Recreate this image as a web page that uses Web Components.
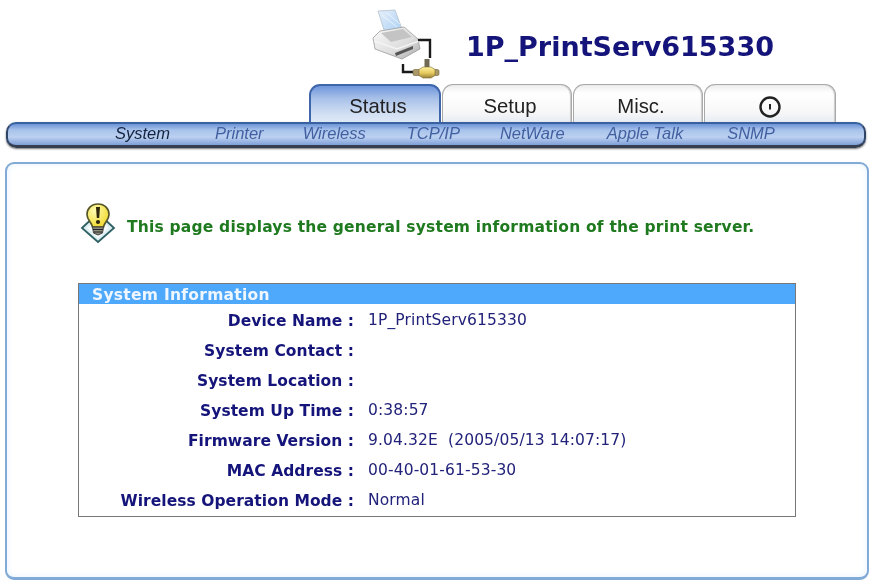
<!DOCTYPE html>
<html>
<head>
<meta charset="utf-8">
<title>1P_PrintServ615330</title>
<style>
  html, body { margin: 0; padding: 0; background: #fff; overflow: hidden; }
  body { width: 870px; height: 582px; font-family: "DejaVu Sans", Verdana, sans-serif; filter: blur(.35px); }
</style>
</head>
<body>
<ps-header name="1P_PrintServ615330"></ps-header>
<ps-tabs>
  <ps-tab active>Status</ps-tab>
  <ps-tab>Setup</ps-tab>
  <ps-tab>Misc.</ps-tab>
  <ps-tab icon>
    <svg width="24" height="24" viewBox="0 0 24 24" fill="none" stroke="#222" aria-label="Power">
      <circle cx="12" cy="12" r="9.500" stroke-width="2.400"/>
      <path d="M12 9v5.500" stroke-width="2"/>
    </svg>
  </ps-tab>
</ps-tabs>
<ps-subnav>
  <a class="on" style="margin-left:107px">System</a>
  <a style="margin-left:45px">Printer</a>
  <a style="margin-left:39px">Wireless</a>
  <a style="margin-left:41px">TCP/IP</a>
  <a style="margin-left:40px">NetWare</a>
  <a style="margin-left:42px">Apple Talk</a>
  <a style="margin-left:44px">SNMP</a>
</ps-subnav>
<ps-panel>
  <ps-hint>This page displays the general system information of the print server.</ps-hint>
  <ps-info title="System Information">
    <ps-row label="Device Name :">1P_PrintServ615330</ps-row>
    <ps-row label="System Contact :"></ps-row>
    <ps-row label="System Location :"></ps-row>
    <ps-row label="System Up Time :">0:38:57</ps-row>
    <ps-row label="Firmware Version :">9.04.32E&nbsp; (2005/05/13 14:07:17)</ps-row>
    <ps-row label="MAC Address :">00-40-01-61-53-30</ps-row>
    <ps-row label="Wireless Operation Mode :">Normal</ps-row>
  </ps-info>
</ps-panel>

<script>
// small helper so every element gets an open shadow root the same way
function shadow(el, html) {
  el.attachShadow({ mode: 'open' });
  el.shadowRoot.innerHTML = html;
}

class PsHeader extends HTMLElement {
  connectedCallback() {
    shadow(this, `
      <style>
        :host { display: flex; align-items: flex-start; height: 84px; padding-left: 372px; box-sizing: border-box; }
        svg { margin-top: 8px; flex: none; }
        h1 { margin: 31px 0 0 24px; font: bold 27px/32px "DejaVu Sans", Verdana, sans-serif; color: #14147a; white-space: nowrap; }
      </style>
      <svg width="70" height="72" viewBox="0 0 70 72">
        <defs>
          <linearGradient id="pa" x1="0" y1="0" x2="1" y2="1"><stop offset="0" stop-color="#e6eff9"/><stop offset="1" stop-color="#a9d0f5"/></linearGradient>
          <linearGradient id="pb" x1="0" y1="0" x2="1" y2="1"><stop offset="0" stop-color="#fafafa"/><stop offset=".6" stop-color="#dedede"/><stop offset="1" stop-color="#a5a5a5"/></linearGradient>
          <linearGradient id="go" x1="0" y1="0" x2="0" y2="1"><stop offset="0" stop-color="#fff3a0"/><stop offset=".55" stop-color="#e6c95e"/><stop offset="1" stop-color="#96803a"/></linearGradient>
        </defs>
        <path d="M6 3 L23 2 L30 21 L13 25 Z" fill="url(#pa)" stroke="#b4c0cc" stroke-width=".8"/>
        <path d="M10 7 L25 19 M15 5 L28 16" stroke="#fff" stroke-width="1" opacity=".6"/>
        <path d="M1 30 L8 23 L32 19 L46 31 L48 41 L30 51 L3 41 Z" fill="url(#pb)" stroke="#9a9a9a" stroke-width=".8"/>
        <path d="M9 25 L31 21 L40 29 L19 34 Z" fill="#c4c4c4"/>
        <path d="M2 33 L25 41 L47 33" fill="none" stroke="#f4f4f4" stroke-width="1.500"/>
        <path d="M23 45 L41 38 L41 41 L24 48 Z" fill="#555"/>
        <path d="M46 32 H58 V50" fill="none" stroke="#1a1a1a" stroke-width="2.400"/>
        <path d="M31 56 V64 H41" fill="none" stroke="#1a1a1a" stroke-width="2.400"/>
        <rect x="52.500" y="51" width="5" height="9" fill="#6f6a55"/>
        <rect x="41" y="61.500" width="26" height="6" rx="1.500" fill="#a8986a" stroke="#6f6230" stroke-width=".6"/>
        <path d="M47 61.500 L51 59 H59 L63 61.500 V67.500 L59 70 H51 L47 67.500 Z" fill="url(#go)" stroke="#7d6c30" stroke-width=".6"/>
      </svg>
      <h1>${this.getAttribute('name')}</h1>`);
  }
}

class PsTabs extends HTMLElement {
  connectedCallback() {
    shadow(this, `
      <style>
        :host { display: flex; height: 38px; padding-left: 309px; gap: 1px; box-sizing: border-box; }
      </style>
      <slot></slot>`);
  }
}

class PsTab extends HTMLElement {
  connectedCallback() {
    shadow(this, `
      <style>
        :host {
          display: flex; align-items: center; justify-content: center;
          width: 130px; height: 38px; box-sizing: border-box; padding: 5px 0 0 6px;
          font: 20.300px "Liberation Sans", Arial, sans-serif; color: #222;
          border: 1px solid #a9a9a9; border-bottom: 0; border-radius: 11px 11px 0 0;
          background: linear-gradient(#ededed, #fff 22%, #f8f8f8 70%, #e8edf3);
          box-shadow: inset -1px 0 1px #c9c9c9;
        }
        :host([active]) {
          width: 132px;
          border: 2px solid #3f66ab; border-bottom: 0;
          background: linear-gradient(#6f96dc, #a9c1e8 35%, #d4e1f4 80%, #dde8f6);
          box-shadow: none;
        }
        :host([icon]) { width: 132px; padding: 7px 0 0 0; }
      </style>
      <slot></slot>`);
  }
}

class PsSubnav extends HTMLElement {
  connectedCallback() {
    shadow(this, `
      <style>
        :host {
          display: flex; align-items: center; margin: 0 4px 0 6px; height: 26px; box-sizing: border-box;
          padding-bottom: 3px;
          border: 2px solid #2e4468; border-top-color: #39619f; border-bottom: 3px solid #353f50;
          border-radius: 10px;
          background: linear-gradient(#6d95d6, #a9c3ec 30%, #bcd1f1 62%, #7f9fd8);
          box-shadow: 0 1px 2px #777;
        }
        ::slotted(a) { font: italic 16.500px "Liberation Sans", Arial, sans-serif; color: #42609f; white-space: nowrap; }
        ::slotted(a.on) { color: #14233f; }
      </style>
      <slot></slot>`);
  }
}

class PsPanel extends HTMLElement {
  connectedCallback() {
    shadow(this, `
      <style>
        :host {
          display: block; margin: 14px 1px 0 5px; height: 418px; box-sizing: border-box;
          padding: 39px 0 0 71px;
          border: 2px solid #81aad6; border-bottom-width: 3px; border-radius: 9px;
          background: #fff; box-shadow: inset 0 0 7px #e6f4ff;
        }
      </style>
      <slot></slot>`);
  }
}

class PsHint extends HTMLElement {
  connectedCallback() {
    shadow(this, `
      <style>
        :host { display: flex; align-items: center; gap: 11px; height: 42px; margin-left: 2px;
          font: bold 15.500px "DejaVu Sans", Verdana, sans-serif; letter-spacing: .2px; color: #1f7a1f; white-space: nowrap; }
        svg { flex: none; }
        span { margin-top: 5px; }
      </style>
      <svg width="36" height="42" viewBox="0 0 36 42">
        <defs><radialGradient id="bu" cx=".35" cy=".3" r=".75"><stop offset="0" stop-color="#fffbb0"/><stop offset="1" stop-color="#f0d92c"/></radialGradient></defs>
        <path d="M2 25 L18 10 L34 25 L18 39 Z" fill="#dff0f3" stroke="#2e5f62" stroke-width="1.800"/>
        <path d="M7 25 L18 15 L29 25 L18 35 Z" fill="#f6fbfc"/>
        <path d="M18 1 C11 1 7 6 7 11.500 C7 17 11.500 19 12.500 24 H23.500 C24.500 19 29 17 29 11.500 C29 6 25 1 18 1 Z" fill="url(#bu)" stroke="#55552a" stroke-width="1.700"/>
        <path d="M12.500 24 H23.500 L22.500 30 L18 32 L13.500 30 Z" fill="#8d8d80" stroke="#3f3f3f" stroke-width="1"/>
        <path d="M13 26.500 H23 M14 29 H22" stroke="#222" stroke-width="1"/>
        <path d="M16 4 H20 L19.200 15 H16.800 Z" fill="#30260a"/>
        <circle cx="18" cy="19" r="2.100" fill="#30260a"/>
      </svg>
      <span><slot></slot></span>`);
  }
}

class PsInfo extends HTMLElement {
  connectedCallback() {
    shadow(this, `
      <style>
        :host { display: block; width: 718px; height: 234px; margin-top: 38px; box-sizing: border-box;
          border: 1px solid #777; background: #fff; }
        .bar { height: 20px; padding-left: 13px; background: #4ea8fb; color: #eef6ff;
          font: bold 15.500px/23px "DejaVu Sans", Verdana, sans-serif; letter-spacing: .28px; }
        .rows { display: grid; grid-auto-rows: 30px; margin-top: 2px; }
      </style>
      <div class="bar">${this.getAttribute('title')}</div>
      <div class="rows"><slot></slot></div>`);
  }
}

class PsRow extends HTMLElement {
  connectedCallback() {
    shadow(this, `
      <style>
        :host { display: grid; grid-template-columns: 275px 1fr; column-gap: 14px; align-items: center; white-space: pre; }
        b { justify-self: end; font: bold 15.500px "DejaVu Sans", Verdana, sans-serif; letter-spacing: .05px; color: #14147a; }
        span { font: 15.500px "DejaVu Sans", Verdana, sans-serif; letter-spacing: .12px; color: #22227a; margin-top: -2px; }
      </style>
      <b>${this.getAttribute('label')}</b>
      <span><slot></slot></span>`);
  }
}

customElements.define('ps-header', PsHeader);
customElements.define('ps-tabs', PsTabs);
customElements.define('ps-tab', PsTab);
customElements.define('ps-subnav', PsSubnav);
customElements.define('ps-panel', PsPanel);
customElements.define('ps-hint', PsHint);
customElements.define('ps-info', PsInfo);
customElements.define('ps-row', PsRow);
</script>
</body>
</html>
